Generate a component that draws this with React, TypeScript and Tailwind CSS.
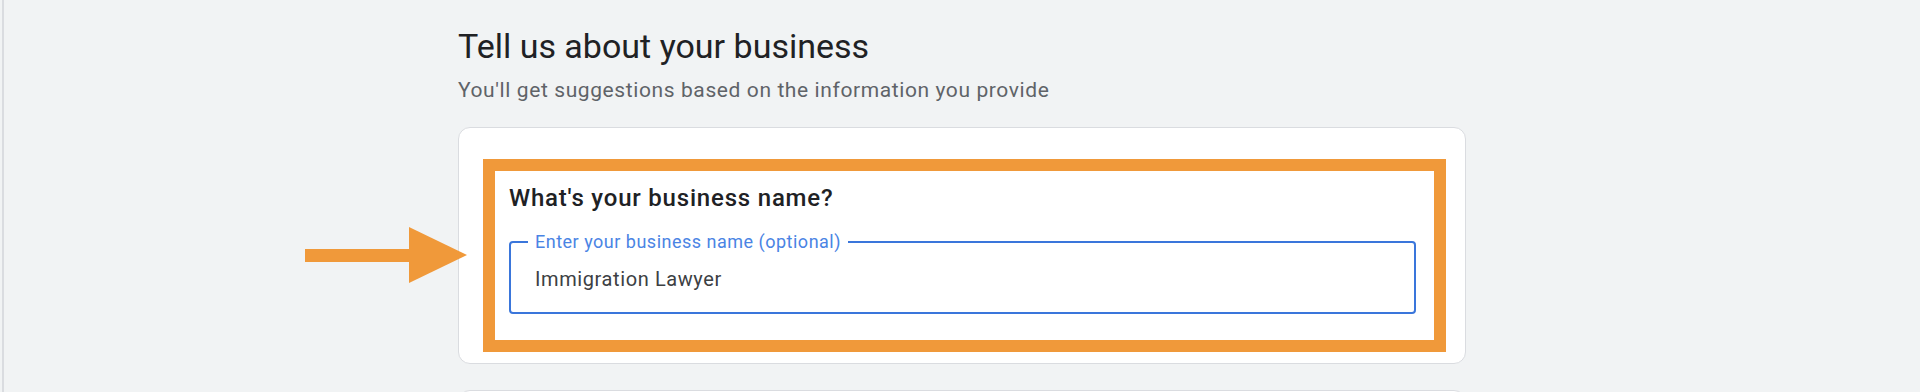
export default function App() {
  return (
    <div className="h-[392px] overflow-hidden bg-[#f1f3f4] pl-[2px] font-['Roboto',sans-serif]">
      <div className="flex h-full border-l-2 border-[#dadce0]">
        <main className="mx-auto w-[1008px]">
          <h1 className="pt-6 text-[34px] leading-[44px] text-[#202124]">
            Tell us about your business
          </h1>
          <p className="mt-2 text-[21px] leading-[28px] tracking-[0.6px] text-[#5f6368]">
            You'll get suggestions based on the information you provide
          </p>

          <section className="relative mt-[23px] rounded-xl border border-[#dadce0] bg-white pt-[31px] pr-[19px] pb-[11px] pl-6">
            {/* annotation arrow */}
            <svg
              className="absolute top-[99px] left-[-154px]"
              width="162"
              height="56"
              viewBox="0 0 162 56"
            >
              <rect x="0" y="22" width="105" height="13" fill="#f0993a" />
              <polygon points="104,0 162,28 104,56" fill="#f0993a" />
            </svg>

            <div className="border-[12px] border-[#f0993a] pt-[13px] pr-[18px] pb-[26px] pl-[14px]">
              <h2 className="text-[24px] leading-[28px] font-medium tracking-[0.8px] text-[#202124]">
                What's your business name?
              </h2>

              <fieldset className="mt-5 rounded border-2 border-[#3a76db] pt-[13px] pb-[19px]">
                <legend className="ml-[17px] px-[7px] text-[18px] leading-[20px] tracking-[0.5px] text-[#4a84e4]">
                  Enter your business name (optional)
                </legend>
                <div className="pl-6 text-[20px] leading-[28px] tracking-[0.6px] text-[#3c4043]">
                  Immigration Lawyer
                </div>
              </fieldset>
            </div>
          </section>

          <section className="mt-[26px] h-[120px] rounded-xl border border-[#dadce0] bg-white" />
        </main>
      </div>
    </div>
  );
}
